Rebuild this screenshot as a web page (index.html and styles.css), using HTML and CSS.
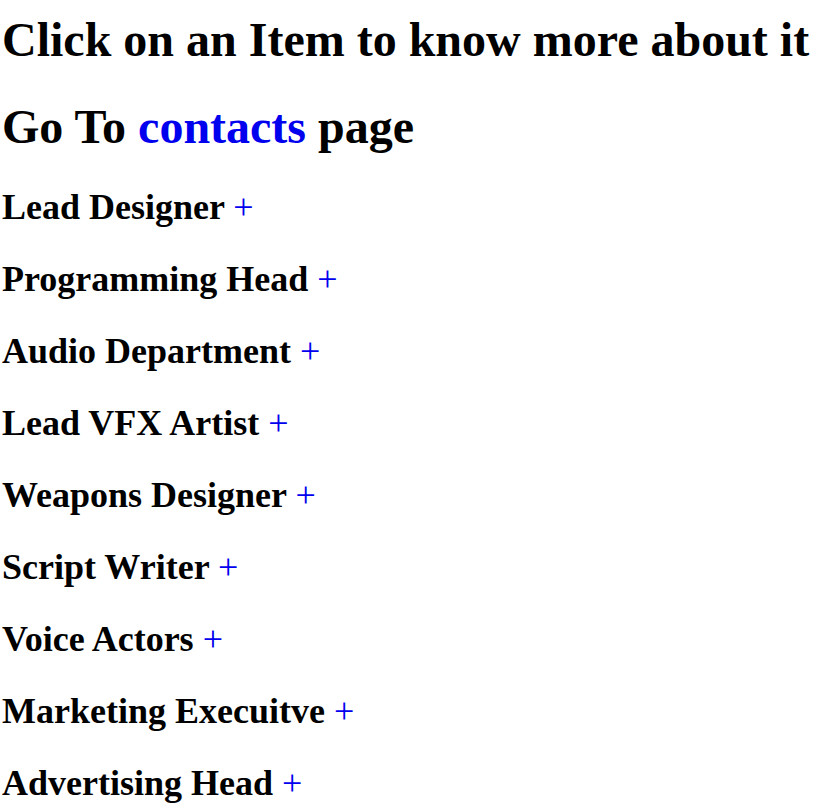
FILE: index.html
```html
<!DOCTYPE html>
<html>
<head>
<meta charset="utf-8">
<link rel="stylesheet" href="styles.css">
</head>
<body>
<h1 class="title">Click on an Item to know more about it</h1>
<h1 class="title title-last">Go To <a href="#" class="link">contacts</a> page</h1>
<h2 class="item">Lead Designer <span class="plus">+</span></h2>
<h2 class="item">Programming Head <span class="plus">+</span></h2>
<h2 class="item">Audio Department <span class="plus">+</span></h2>
<h2 class="item">Lead VFX Artist <span class="plus">+</span></h2>
<h2 class="item">Weapons Designer <span class="plus">+</span></h2>
<h2 class="item">Script Writer <span class="plus">+</span></h2>
<h2 class="item">Voice Actors <span class="plus">+</span></h2>
<h2 class="item">Marketing Execuitve <span class="plus">+</span></h2>
<h2 class="item">Advertising Head <span class="plus">+</span></h2>
</body>
</html>
```
FILE: styles.css
```css
html, body {
  background: #fff;
}
body {
  margin: 0;
  padding: 12px 0 0 2px;
  font-family: "Liberation Serif", "Times New Roman", serif;
  color: #000;
  overflow: hidden;
}
.title {
  font-size: 48px;
  font-weight: bold;
  margin: 0 0 32px 0;
  line-height: normal;
  white-space: nowrap;
}
.title-last {
  margin-bottom: 32px;
}
.link {
  color: #0000ee;
  text-decoration: none;
}
.item {
  font-size: 36px;
  font-weight: bold;
  margin: 0 0 30px 0;
  line-height: normal;
  white-space: nowrap;
}
.plus {
  color: #0000ee;
  font-weight: normal;
}
```
